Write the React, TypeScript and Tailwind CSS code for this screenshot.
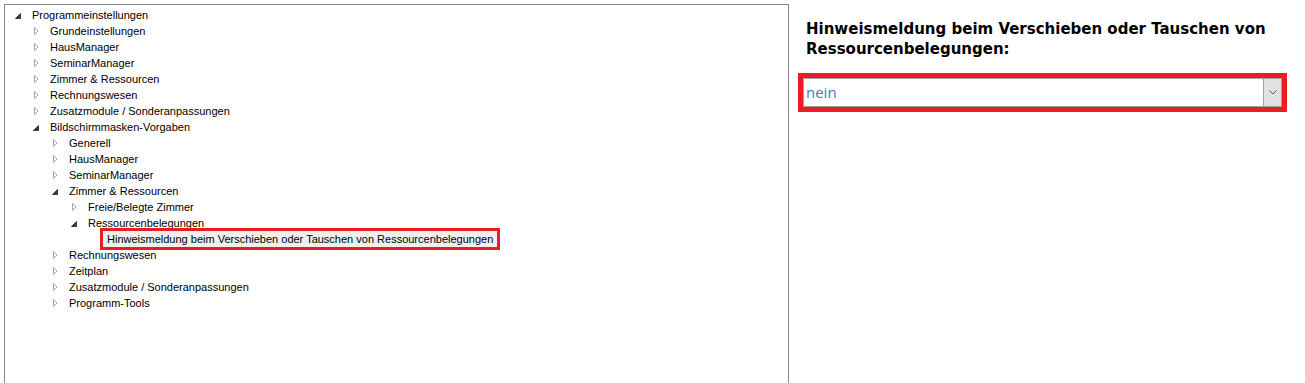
import React from "react";

type Node = { label: string; level: number; state: "open" | "closed" | "leaf"; selected?: boolean };

const nodes: Node[] = [
  { label: "Programmeinstellungen", level: 0, state: "open" },
  { label: "Grundeinstellungen", level: 1, state: "closed" },
  { label: "HausManager", level: 1, state: "closed" },
  { label: "SeminarManager", level: 1, state: "closed" },
  { label: "Zimmer & Ressourcen", level: 1, state: "closed" },
  { label: "Rechnungswesen", level: 1, state: "closed" },
  { label: "Zusatzmodule / Sonderanpassungen", level: 1, state: "closed" },
  { label: "Bildschirmmasken-Vorgaben", level: 1, state: "open" },
  { label: "Generell", level: 2, state: "closed" },
  { label: "HausManager", level: 2, state: "closed" },
  { label: "SeminarManager", level: 2, state: "closed" },
  { label: "Zimmer & Ressourcen", level: 2, state: "open" },
  { label: "Freie/Belegte Zimmer", level: 3, state: "closed" },
  { label: "Ressourcenbelegungen", level: 3, state: "open" },
  { label: "Hinweismeldung beim Verschieben oder Tauschen von Ressourcenbelegungen", level: 4, state: "leaf", selected: true },
  { label: "Rechnungswesen", level: 2, state: "closed" },
  { label: "Zeitplan", level: 2, state: "closed" },
  { label: "Zusatzmodule / Sonderanpassungen", level: 2, state: "closed" },
  { label: "Programm-Tools", level: 2, state: "closed" },
];

const indent = ["pl-[8px]", "pl-[26px]", "pl-[45px]", "pl-[64px]", "pl-[83px]"];

function Toggle({ state }: { state: Node["state"] }) {
  if (state === "leaf") return <span className="w-[19px] shrink-0" />;
  return (
    <span className="w-[19px] h-4 shrink-0 flex items-center">
      {state === "open" ? (
        <svg width="19" height="16" viewBox="0 0 19 16">
          <path d="M2.5 11.5 L7.5 11.5 L7.5 6.5 Z" fill="#3b3b3b" stroke="#3b3b3b" strokeWidth="1" />
        </svg>
      ) : (
        <svg width="19" height="16" viewBox="0 0 19 16">
          <path d="M3.5 4.5 L3.5 11.5 L7 8 Z" fill="none" stroke="#a6a6a6" strokeWidth="1" />
        </svg>
      )}
    </span>
  );
}

export default function App() {
  return (
    <div className="flex h-[383px] w-[1305px] overflow-hidden bg-white font-['Liberation_Sans',Arial,sans-serif]">
      <div className="mt-[4px] ml-[4px] w-[785px] h-[400px] shrink-0 border border-[#828790] bg-white pt-[2px]">
        {nodes.map((n, i) => (
          <div key={i} className={`flex h-4 items-center ${indent[n.level]}`}>
            <Toggle state={n.state} />
            {n.selected ? (
              <span className="-ml-[7px] flex h-[22px] items-center border-[3px] border-[#ed1c24] bg-[#efefef] px-[4px] text-[11px] text-black whitespace-nowrap">
                {n.label}
              </span>
            ) : (
              <span className="text-[11px] text-black whitespace-nowrap">{n.label}</span>
            )}
          </div>
        ))}
      </div>
      <div className="flex-1 pl-[17px] pr-[18px] pt-[19px]">
        <h2 className="font-['DejaVu_Sans',Verdana,sans-serif] text-[15px] font-bold leading-[20px] text-black">
          Hinweismeldung beim Verschieben oder Tauschen von
          <br />
          Ressourcenbelegungen:
        </h2>
        <div className="mt-[14px] -ml-[8px] w-[489px] border-[5px] border-[#ed1c24]">
          <div className="flex h-[29px] border border-[#a0a0a0] bg-white">
            <span className="flex flex-1 items-center pl-[2px] font-['Open_Sans',sans-serif] text-[15px] text-[#3c7fc1]">nein</span>
            <span className="flex w-[18px] items-center justify-center border-l border-[#a0a0a0] bg-[#e1e1e1]">
              <svg width="8" height="5" viewBox="0 0 8 5">
                <path d="M0.5 0.5 L4 4 L7.5 0.5" fill="none" stroke="#606060" strokeWidth="1" />
              </svg>
            </span>
          </div>
        </div>
      </div>
    </div>
  );
}
